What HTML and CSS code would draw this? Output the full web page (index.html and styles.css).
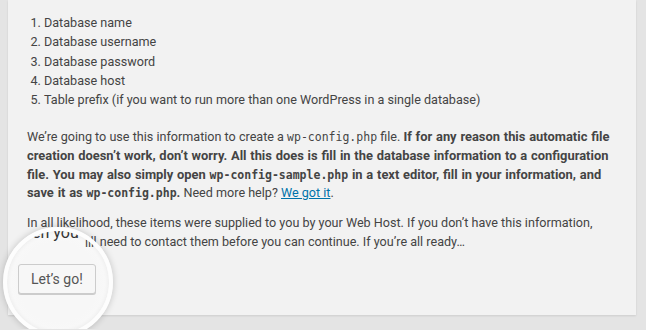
FILE: index.html
```html
<!DOCTYPE html>
<html lang="en">
<head>
    <meta charset="UTF-8">
    <title>WordPress &rsaquo; Setup Configuration File</title>
    <link rel="stylesheet" href="styles.css">
</head>
<body>
    <div class="wp-card">
        <ol class="needs">
            <li>Database name</li>
            <li>Database username</li>
            <li>Database password</li>
            <li>Database host</li>
            <li>Table prefix (if you want to run more than one WordPress in a single database)</li>
        </ol>
        <p class="info">We&#8217;re going to use this information to create a <code>wp-config.php</code> file. <strong>If for any reason this automatic file<br>
        creation doesn&#8217;t work, don&#8217;t worry. All this does is fill in the database information to a configuration<br>
        file. You may also simply open <code>wp-config-sample.php</code> in a text editor, fill in your information, and<br>
        save it as <code>wp-config.php</code>.</strong> Need more help? <a href="#">We got it</a>.</p>
        <p class="ready">In all likelihood, these items were supplied to you by your Web Host. If you don&#8217;t have this information,<br>
        then you will need to contact them before you can continue. If you&#8217;re all ready&hellip;</p>
        <div class="magnifier">
            <span class="zoomed">then you</span>
            <span class="seen">ill need to contact</span>
        </div>
        <div class="step">
            <a href="#" class="button">Let&#8217;s go!</a>
        </div>
    </div>
</body>
</html>
```

FILE: styles.css
```css
body {
    margin: 0;
    background: #e4e4e4;
    font-family: Roboto, 'Liberation Sans', sans-serif;
    font-size: 12.6px;
    color: #444;
}

.wp-card {
    position: relative;
    width: 628px;
    margin: 0 0 14px 8px;
    padding: 13px 0 21px 19px;
    box-sizing: border-box;
    background: #f2f2f2;
    box-shadow: 0 1px 2px rgba(0,0,0,0.1);
}

.needs {
    margin: 0 0 19px;
    padding-left: 17px;
    line-height: 19.3px;
}

p {
    margin: 0;
    white-space: nowrap;
}

.info {
    line-height: 18.6px;
}

.ready {
    margin-top: 10px;
    line-height: 19px;
}

strong {
    font-weight: 700;
    font-size: 12.9px;
    word-spacing: 0.6px;
}

code {
    font-family: 'DejaVu Sans Mono', monospace;
    font-size: 11.5px;
    word-spacing: 0;
}

a {
    color: #0073aa;
}

.step {
    display: flex;
    margin-top: 13px;
    margin-left: -9px;
}

.button {
    position: relative;
    z-index: 2;
    padding: 0 12px;
    height: 30px;
    line-height: 28px;
    box-sizing: border-box;
    font-size: 14px;
    color: #555;
    text-decoration: none;
    background: #f7f7f7;
    border: 1px solid #ccc;
    border-radius: 3px;
    box-shadow: 0 1px 0 #ccc;
}

.magnifier {
    position: absolute;
    z-index: 1;
    left: -5px;
    top: 227px;
    width: 102px;
    height: 102px;
    border-radius: 50%;
    overflow: hidden;
    background: radial-gradient(circle, #f7f7f7 55%, #fbfbfb 100%);
    border: 4px solid #fdfdfd;
    box-shadow: 0 0 7px rgba(0,0,0,0.2), inset 0 0 5px rgba(0,0,0,0.07);
}

.zoomed {
    position: absolute;
    left: 11px;
    top: -8px;
    font-size: 16px;
    line-height: 19px;
    color: #333;
    white-space: nowrap;
}

.seen {
    position: absolute;
    left: 78px;
    top: 2px;
    line-height: 19px;
    white-space: nowrap;
}
```
